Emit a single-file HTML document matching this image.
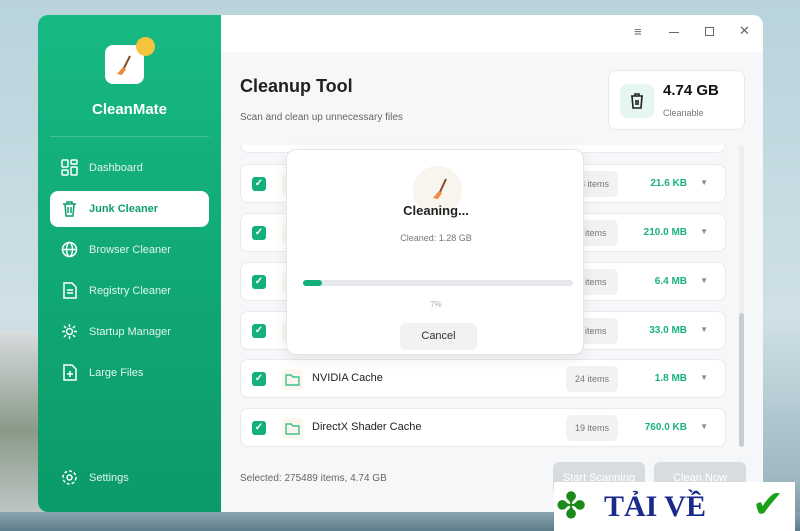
<!DOCTYPE html>
<html><head><meta charset="utf-8"><style>
*{box-sizing:border-box;margin:0;padding:0}
body{width:800px;height:531px;overflow:hidden;font-family:"Liberation Sans",sans-serif;position:relative;background:linear-gradient(180deg,#b9d3dc 0%,#cfe0e6 60%,#9fb8c2 90%,#6f8a96 100%)}
.hill{position:absolute;left:0;top:330px;width:60px;height:200px;background:linear-gradient(180deg,#d8dde0,#8a9a88 50%,#c9cfd2)}
.sea{position:absolute;left:0;top:512px;width:800px;height:19px;background:linear-gradient(180deg,#8aa5b0,#5d7b88)}
.win{position:absolute;left:38px;top:15px;width:725px;height:497px;border-radius:10px;overflow:hidden;background:#f6f7f9}
.side{position:absolute;left:0;top:0;width:183px;height:497px;background:linear-gradient(180deg,#17b983,#0b9a69)}
.logo{position:absolute;left:67px;top:30px;width:39px;height:39px;background:#fff;border-radius:8px}
.badge{position:absolute;left:98px;top:22px;width:19px;height:19px;border-radius:50%;background:#f6c43c}
.brand{position:absolute;left:0;width:183px;top:86px;text-align:center;color:#fff;font-weight:bold;font-size:15px}
.sep{position:absolute;left:12px;top:121px;width:159px;height:1px;background:rgba(255,255,255,.2)}
.nav{position:absolute;left:12px;width:159px;height:36px;border-radius:8px;color:#e0f5ec;font-size:11px;line-height:36px;padding-left:39px}
.nav svg{position:absolute;left:11px;top:9px}
.nav.act{background:#fff;color:#0e9e6e;font-weight:bold}
.top{position:absolute;left:183px;top:0;width:542px;height:37px;background:#fff}
.title{position:absolute;left:202px;top:61px;font-size:18px;font-weight:bold;color:#222}
.sub{position:absolute;left:202px;top:97px;font-size:10px;color:#666}
.card{position:absolute;left:570px;top:55px;width:137px;height:60px;background:#fff;border:1px solid #e6e8eb;border-radius:8px}
.list{position:absolute;left:0;top:130px;width:725px;height:310px;overflow:hidden}
.row{position:absolute;left:202px;width:486px;height:39px;background:#fff;border:1px solid #e8eaed;border-radius:8px}
.chk{position:absolute;left:11px;top:12px;width:14px;height:14px;background:#13b07a;border-radius:3px;color:#fff;font-size:10px;line-height:14px;text-align:center;font-weight:bold}
.fold{position:absolute;left:41px;top:9px;width:21px;height:21px;background:#fbf6ee;border-radius:4px}
.nm{position:absolute;left:71px;top:12px;font-size:11px;color:#222}
.cnt{position:absolute;left:325px;top:6px;width:52px;height:26px;background:#f1f2f4;border-radius:6px;font-size:9px;color:#777;text-align:center;line-height:26px}
.sz{position:absolute;right:38px;top:13px;font-size:10px;color:#19b27c;font-weight:bold}
.arr{position:absolute;right:17px;top:13px;font-size:8px;color:#888}
.modal{position:absolute;left:248px;top:134px;width:298px;height:206px;background:#fff;border:1px solid #e3e5e8;border-radius:10px;box-shadow:0 4px 14px rgba(0,0,0,.08)}
.btn{position:absolute;top:447px;height:32px;border-radius:6px;background:#d9dcdf;color:#fff;font-size:11px;text-align:center;line-height:32px}
</style></head><body>
<div class="hill"></div><div class="sea"></div>
<div class="win">
<div class="side">
 <div class="logo"><svg width="39" height="39" viewBox="0 0 39 39"><path d="M25 11 L19 23" stroke="#8a4a2a" stroke-width="2"/><path d="M18 22 L21 24 L17 30 L12 29 Z" fill="#f08a3a"/></svg></div>
 <div class="badge"></div>
 <div class="brand">CleanMate</div>
 <div class="sep"></div>
 <div class="nav" style="top:135px"><svg width="17" height="17" fill="none" stroke="#fff" stroke-width="1.5"><rect x="1" y="1" width="6" height="7" rx="1"/><rect x="10" y="1" width="6" height="4" rx="1"/><rect x="1" y="11" width="6" height="5" rx="1"/><rect x="10" y="8" width="6" height="8" rx="1"/></svg>Dashboard</div>
 <div class="nav act" style="top:176px"><svg width="17" height="17" fill="none" stroke="#0e9e6e" stroke-width="1.5"><path d="M2 4h13M6 4V2h5v2M4 4l1 12h7l1-12M7 7v6M10 7v6"/></svg>Junk Cleaner</div>
 <div class="nav" style="top:217px"><svg width="17" height="17" fill="none" stroke="#fff" stroke-width="1.5"><circle cx="8.5" cy="8.5" r="7"/><ellipse cx="8.5" cy="8.5" rx="3" ry="7"/><path d="M1.5 8.5h14"/></svg>Browser Cleaner</div>
 <div class="nav" style="top:258px"><svg width="17" height="17" fill="none" stroke="#fff" stroke-width="1.5"><path d="M3 1h8l4 4v11H3z M6 8h6M6 11h6"/></svg>Registry Cleaner</div>
 <div class="nav" style="top:299px"><svg width="17" height="17" fill="none" stroke="#fff" stroke-width="1.5"><circle cx="8.5" cy="8.5" r="3"/><path d="M8.5 1v3M8.5 13v3M1 8.5h3M13 8.5h3M3 3l2 2M12 12l2 2M3 14l2-2M12 5l2-2"/></svg>Startup Manager</div>
 <div class="nav" style="top:340px"><svg width="17" height="17" fill="none" stroke="#fff" stroke-width="1.5"><path d="M3 1h8l4 4v11H3z M9 7v6M6 10h6"/></svg>Large Files</div>
 <div class="nav" style="top:445px"><svg width="17" height="17" fill="none" stroke="#fff" stroke-width="1.5"><circle cx="8.5" cy="8.5" r="2.5"/><circle cx="8.5" cy="8.5" r="6.5" stroke-dasharray="3 2"/></svg>Settings</div>
</div>
<div class="top"><span style="position:absolute;left:413px;top:9px;color:#666;font-size:13px">≡</span><span style="position:absolute;left:448px;top:17px;width:10px;height:1px;background:#666"></span><span style="position:absolute;left:484px;top:12px;width:9px;height:9px;border:1px solid #666"></span><span style="position:absolute;left:518px;top:8px;color:#666;font-size:13px">✕</span></div>
<div class="title">Cleanup Tool</div>
<div class="sub">Scan and clean up unnecessary files</div>
<div class="card"><div style="position:absolute;left:11px;top:13px;width:34px;height:34px;background:#e6f7f0;border-radius:7px"><svg width="34" height="34" fill="none" stroke="#222" stroke-width="1.6"><path d="M11 12h12M15 12V10h4v2M12 12l1 12h8l1-12M16 16v5M18 16v5"/></svg></div><div style="position:absolute;left:54px;top:11px;font-size:15px;font-weight:bold;color:#111">4.74 GB</div><div style="position:absolute;left:54px;top:37px;font-size:9px;color:#777">Cleanable</div></div>
<div class="list">
<div class="row" style="top:-31px"></div>
<div class="row" style="top:19px"><div class="chk">✓</div><div class="fold"></div><div class="cnt">13 items</div><div class="sz">21.6 KB</div><div class="arr">▼</div></div>
<div class="row" style="top:68px"><div class="chk">✓</div><div class="fold"></div><div class="cnt">9 items</div><div class="sz">210.0 MB</div><div class="arr">▼</div></div>
<div class="row" style="top:117px"><div class="chk">✓</div><div class="fold"></div><div class="cnt">7 items</div><div class="sz">6.4 MB</div><div class="arr">▼</div></div>
<div class="row" style="top:166px"><div class="chk">✓</div><div class="fold"></div><div class="cnt">5 items</div><div class="sz">33.0 MB</div><div class="arr">▼</div></div>
<div class="row" style="top:214px"><div class="chk">✓</div><div class="fold"><svg width="21" height="21" fill="none" stroke="#3cc08e" stroke-width="1.4"><path d="M4 6h5l2 2h6v8H4z"/></svg></div><div class="nm">NVIDIA Cache</div><div class="cnt">24 items</div><div class="sz">1.8 MB</div><div class="arr">▼</div></div>
<div class="row" style="top:263px"><div class="chk">✓</div><div class="fold"><svg width="21" height="21" fill="none" stroke="#3cc08e" stroke-width="1.4"><path d="M4 6h5l2 2h6v8H4z"/></svg></div><div class="nm">DirectX Shader Cache</div><div class="cnt">19 items</div><div class="sz">760.0 KB</div><div class="arr">▼</div></div>
</div>
<div style="position:absolute;left:701px;top:130px;width:5px;height:302px;background:#eceef0;border-radius:3px"><div style="position:absolute;top:168px;width:5px;height:134px;background:#c9ccd0;border-radius:3px"></div></div>
<div style="position:absolute;left:202px;top:458px;font-size:10px;color:#666">Selected: 275489 items, 4.74 GB</div>
<div class="btn" style="left:515px;width:92px">Start Scanning</div>
<div class="btn" style="left:616px;width:92px">Clean Now</div>
<div class="modal">
 <div style="position:absolute;left:126px;top:16px;width:49px;height:49px;border-radius:50%;background:#f8f4ee"><svg width="49" height="49"><path d="M33 13 L27 26" stroke="#8a4a2a" stroke-width="2"/><path d="M26 25 L29 27 L25 33 L20 32 Z" fill="#f08a3a"/></svg></div>
 <div style="position:absolute;left:0;width:298px;top:53px;text-align:center;font-weight:bold;font-size:13px;color:#222">Cleaning...</div>
 <div style="position:absolute;left:0;width:298px;top:83px;text-align:center;font-size:9px;color:#777">Cleaned: 1.28 GB</div>
 <div style="position:absolute;left:16px;top:130px;width:270px;height:6px;background:#e5e7ea;border-radius:3px"><div style="width:19px;height:6px;background:#13b07a;border-radius:3px"></div></div>
 <div style="position:absolute;left:0;width:298px;top:150px;text-align:center;font-size:8px;color:#aaa">7%</div>
 <div style="position:absolute;left:113px;top:173px;width:77px;height:27px;background:#f1f2f4;border-radius:6px;text-align:center;line-height:27px;font-size:11px;color:#333">Cancel</div>
</div>
</div>
<div style="position:absolute;left:554px;top:482px;width:241px;height:49px;background:#fff"><span style="position:absolute;left:2px;top:4px;font-size:36px;color:#1a8a1a;line-height:40px">✤</span><span style="position:absolute;left:50px;top:8px;font-family:'Liberation Serif',serif;font-size:30px;font-weight:bold;color:#1a2a8a;line-height:34px">TẢI VỀ</span><span style="position:absolute;left:198px;top:2px;font-size:38px;color:#1aa01a;line-height:42px">✔</span></div>
</body></html>
